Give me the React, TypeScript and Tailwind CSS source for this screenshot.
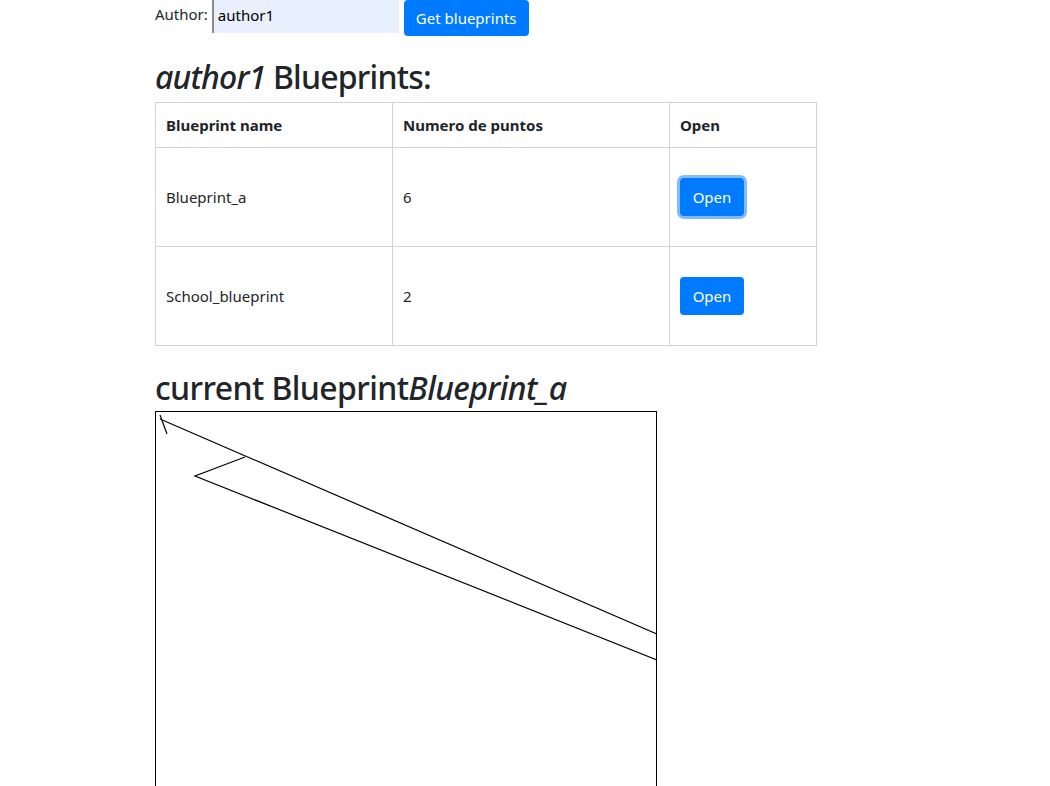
import React from 'react'

const blueprints = [
  { name: 'Blueprint_a', points: 6 },
  { name: 'School_blueprint', points: 2 },
]

function BlueprintCanvas() {
  return (
    <div className="w-[502px] h-[502px] border border-black bg-white">
      <svg width="500" height="500" viewBox="0 0 500 500" className="block">
        <line x1="11" y1="22" x2="4" y2="3" stroke="black" strokeWidth="1.2" />
        <polyline points="4,7 620,273.5" fill="none" stroke="black" strokeWidth="1.2" />
        <polyline points="89,45 39,64 620,295.3" fill="none" stroke="black" strokeWidth="1.2" />
      </svg>
    </div>
  )
}

export default function App() {
  return (
    <div className="min-h-screen bg-white text-[#212529] font-['Noto_Sans','Segoe_UI',sans-serif] text-[16px]">
      <div className="pl-[155px]">
        {/* Author search */}
        <div className="flex items-start h-[36px]">
          <span className="leading-[24px] pt-[2px] text-[15px]">Author:</span>
          <input
            defaultValue="author1"
            className="ml-[4px] w-[187px] h-[33px] bg-[#e8f0fe] border-l-2 border-l-[#8a8a8a] px-[4px] pb-[4px] text-[15px] text-black outline-none"
          />
          <button className="ml-[5px] h-[36px] px-[12px] rounded-[4px] bg-[#007bff] text-white text-[15px] leading-[24px]">
            Get blueprints
          </button>
        </div>

        <h2 className="mt-[22px] mb-[6px] text-[32px] leading-[1.2] font-medium tracking-[-0.8px]">
          <i>author1</i> Blueprints:
        </h2>

        <table className="w-[662px] border-collapse mb-[23px] text-[15px]">
          <thead>
            <tr className="h-[45px]">
              <th className="w-[237px] border border-[#d3d3d3] px-[10px] text-left font-bold">Blueprint name</th>
              <th className="w-[277px] border border-[#d3d3d3] px-[10px] text-left font-bold">Numero de puntos</th>
              <th className="border border-[#d3d3d3] px-[10px] text-left font-bold">Open</th>
            </tr>
          </thead>
          <tbody>
            {blueprints.map((bp, i) => (
              <tr key={bp.name} className="h-[99px]">
                <td className="border border-[#d3d3d3] px-[10px] align-middle">{bp.name}</td>
                <td className="border border-[#d3d3d3] px-[10px] align-middle">{bp.points}</td>
                <td className="border border-[#d3d3d3] px-[10px] align-middle">
                  <button
                    className={
                      i === 0
                        ? 'w-[64px] h-[38px] rounded-[4px] bg-[#007bff] text-white shadow-[0_0_0_3px_rgba(0,123,255,0.5)]'
                        : 'w-[64px] h-[38px] rounded-[4px] bg-[#007bff] text-white'
                    }
                  >
                    Open
                  </button>
                </td>
              </tr>
            ))}
          </tbody>
        </table>

        <h2 className="mb-[3px] text-[32px] leading-[1.2] font-medium tracking-[-0.6px]">
          current Blueprint<i>Blueprint_a</i>
        </h2>

        <BlueprintCanvas />
      </div>
    </div>
  )
}
